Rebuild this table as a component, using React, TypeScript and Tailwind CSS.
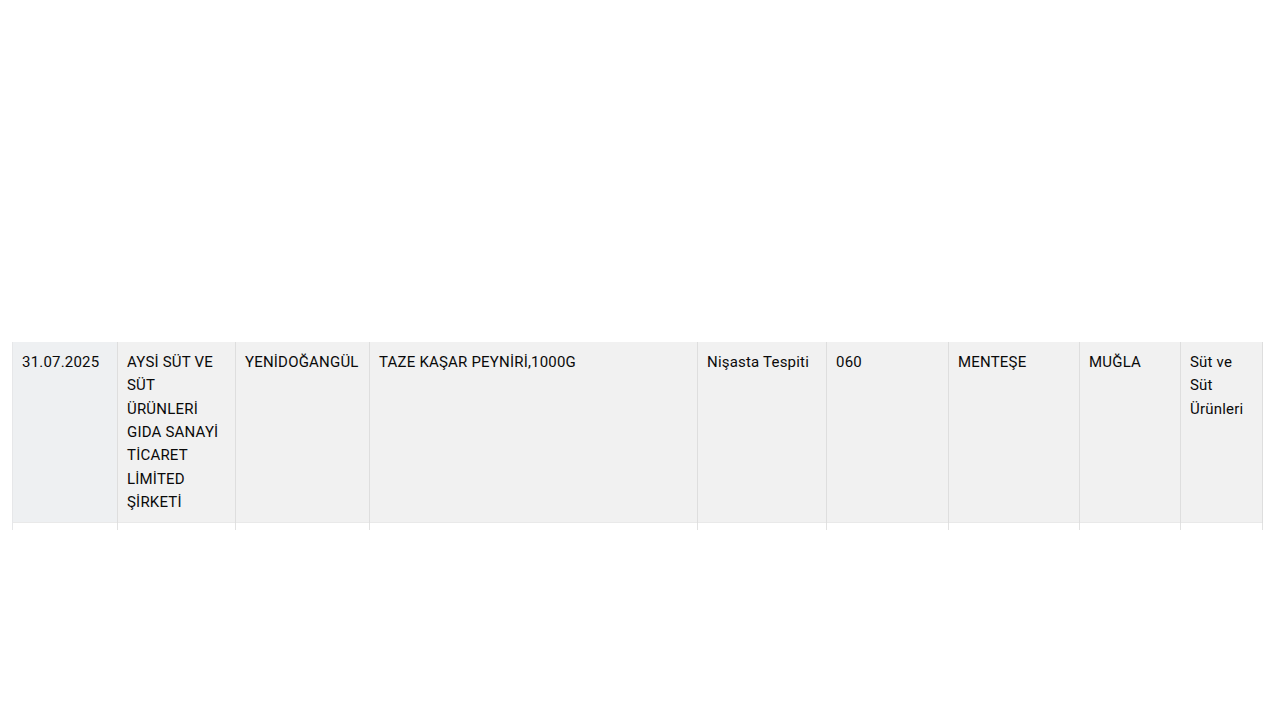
import React from "react";

const widths = [105, 118, 134, 328, 129, 122, 131, 101, 82];
const cells = [
  "31.07.2025",
  "AYSİ SÜT VE SÜT ÜRÜNLERİ GIDA SANAYİ TİCARET LİMİTED ŞİRKETİ",
  "YENİDOĞANGÜL",
  "TAZE KAŞAR PEYNİRİ,1000G",
  "Nişasta Tespiti",
  "060",
  "MENTEŞE",
  "MUĞLA",
  "Süt ve Süt Ürünleri",
];

export default function App() {
  return (
    <div className="w-[1280px] h-[720px] bg-white pt-[342px] pl-[12px]" style={{ fontFamily: "Roboto, 'Noto Sans', sans-serif" }}>
      <table className="table-fixed border-collapse w-[1250px] text-[15px] tracking-[0.2px] leading-[23.33px] text-[#0a0a0a]">
        <colgroup>
          {widths.map((w, i) => (
            <col key={i} style={{ width: w }} />
          ))}
        </colgroup>
        <tbody>
          <tr className="bg-[#f1f1f1] border-b border-[#e9e9e9]">
            {cells.map((c, i) => (
              <td
                key={i}
                className={
                  "align-top pt-[9px] pb-[7px] pl-[9px] pr-[8px] h-[180px] border-r border-[#dedede] break-words " +
                  (i === 0 ? "bg-[#eef0f2] border-l border-l-[#e6e7e9]" : "")
                }
              >
                {c}
              </td>
            ))}
          </tr>
          <tr className="h-[8px]">
            {cells.map((_, i) => (
              <td key={i} className={"p-0 h-[8px] border-r border-[#e2e2e2] " + (i === 0 ? "border-l border-l-[#e6e7e9]" : "")} />
            ))}
          </tr>
        </tbody>
      </table>
    </div>
  );
}
